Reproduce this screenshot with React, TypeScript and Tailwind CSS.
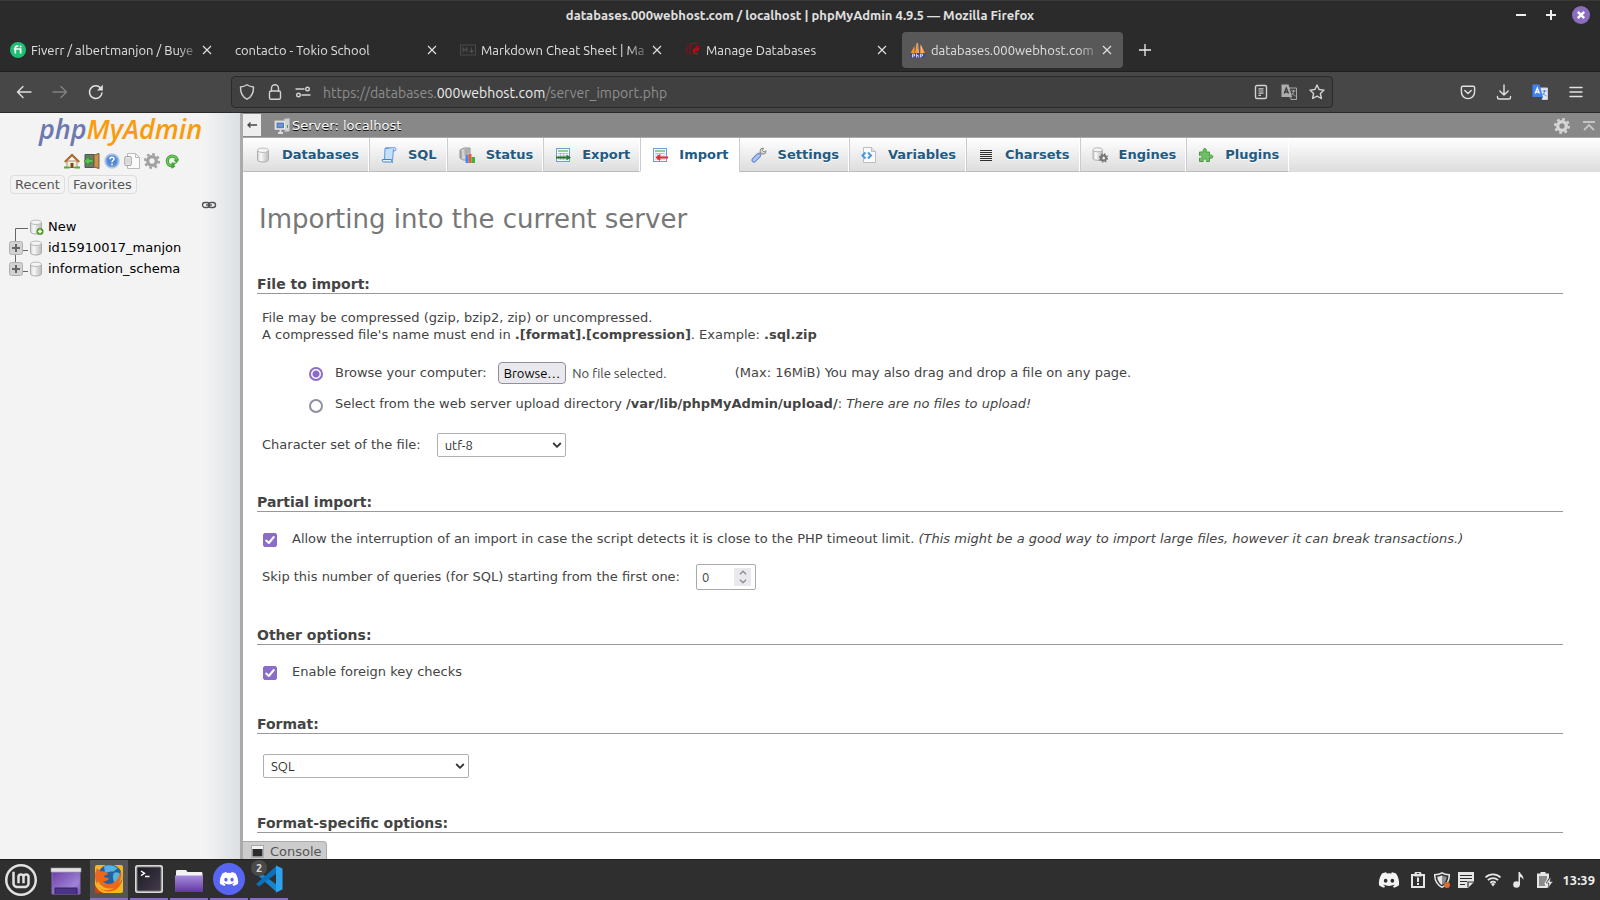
import { useRef, useState, type ReactNode } from "react";
import { FaDiscord } from "react-icons/fa";
import { SiLinuxmint } from "react-icons/si";

const uiFont = "font-['Ubuntu','Noto_Sans',sans-serif]";
const pageFont = "font-['DejaVu_Sans',sans-serif]";

function Svg({ size = 16, box = 16, children }: { size?: number; box?: number; children: ReactNode }) {
  return (
    <svg width={size} height={size} viewBox={`0 0 ${box} ${box}`} fill="none" className="shrink-0" aria-hidden="true">
      {children}
    </svg>
  );
}

/* ---------- browser icons ---------- */

const CloseX = () => (
  <Svg size={10} box={10}>
    <path d="M1 1l8 8M9 1l-8 8" stroke="#e4e4e4" strokeWidth="1.1" />
  </Svg>
);

const FiverrIcon = () => (
  <Svg>
    <circle cx="8" cy="8" r="8" fill="#1dbf73" />
    <path d="M8.300 4.200H7.400C6 4.200 5.300 5 5.300 6.200v5.300M3.800 7h6.800v4.500" stroke="#fff" strokeWidth="1.700" />
    <circle cx="10.600" cy="4.600" r="1" fill="#fff" />
  </Svg>
);

const MarkdownIcon = () => (
  <Svg>
    <rect x="0.500" y="3" width="15" height="10" stroke="#4a4a4a" />
    <path d="M3 10.500V6l2 2.500L7 6v4.500M11.500 5.500v4.500M9.500 8.500l2 2 2-2" stroke="#4e4e4e" strokeWidth="1.200" />
  </Svg>
);

const HostIcon = () => (
  <Svg>
    <path d="M4 3C1.500 5 1 9 3 12M6.500 3.500C4 5.500 4 10 6 13" stroke="#7d1319" strokeWidth="1.300" />
    <path d="M8.500 8.500c1-2.800 4-3 5-1.500-.8 2-3.800 1.500-5 1.500-.3 2.500 2 3.700 4.500 3" stroke="#b81019" strokeWidth="1.500" />
    <path d="M5 2.500c3-2 6-1.500 8 0M11 4.500h4" stroke="#8d151b" strokeWidth="1.100" />
  </Svg>
);

const PmaFavicon = () => (
  <Svg>
    <path d="M6.500 0L8.500 11H5zM4.500 3.500V11H.8zM10.500 2L15 11H10z" fill="#f79a22" />
    <path d="M7.500 1l1 10M11 4l1.500 7" stroke="#d9d4c8" strokeWidth=".8" />
    <path d="M0 11h16l-1 5H.8z" fill="#4a4b82" />
    <path d="M2.500 15.500v-3.500H4.500v2H2.500M6.500 11.500v4M6.500 13.500h1.800v2M10.500 15.500v-3.500h2v2h-2" stroke="#d5d6f0" strokeWidth=".9" />
  </Svg>
);

const TranslateIcon = ({ color }: { color?: boolean }) => (
  <Svg>
    <path d="M8 4h7.500v11.500H10z" fill={color ? "#e8e8ea" : "#454545"} stroke={color ? "#c9ccd2" : "#a8a8a8"} />
    <path d="M10.500 7h4M12.500 6v1c0 2-1 3-2 4M11 9c1 1.500 2 2.500 3.500 3" stroke={color ? "#4a82e8" : "#a8a8a8"} />
    <path d="M.5.5h7L11 13H.5z" fill={color ? "#3f83f3" : "#adadad"} />
    <path d="M8 13l1.500 2.500 1.500-2.500z" fill={color ? "#2052b4" : "#777"} />
    <path d="M3.200 9.500L5.300 4l2.200 5.500M4 8h2.700" stroke={color ? "#fff" : "#3c3c3c"} strokeWidth="1.300" />
  </Svg>
);

const stroke = { stroke: "#e2e2e2", strokeWidth: 1.4, strokeLinecap: "round" as const, strokeLinejoin: "round" as const };

const BackIcon = () => (
  <Svg><path d="M15 8H1.500M7 2.500L1.500 8 7 13.500" {...stroke} /></Svg>
);
const ForwardIcon = () => (
  <Svg><path d="M1 8h13.500M9 2.500L14.500 8 9 13.500" {...stroke} stroke="#828282" /></Svg>
);
const ReloadIcon = () => (
  <Svg>
    <path d="M14 9a6.300 6.300 0 1 1-1.500-5" {...stroke} strokeWidth="1.500" />
    <path d="M14.800.8v5.700H9z" fill="#e2e2e2" />
  </Svg>
);
const ShieldIcon = () => (
  <Svg><path d="M8 .8c2 1.400 4.200 2 6.500 2.200C14.600 8.500 12.500 13 8 15.200 3.500 13 1.400 8.500 1.500 3 3.800 2.800 6 2.200 8 .8z" {...stroke} stroke="#d2d2d2" /></Svg>
);
const LockIcon = () => (
  <Svg>
    <rect x="2.500" y="7" width="11" height="8.200" rx="1.500" {...stroke} stroke="#d2d2d2" />
    <path d="M4.500 7V4.300a3.500 3.500 0 0 1 7 0V7" {...stroke} stroke="#d2d2d2" />
  </Svg>
);
const PermissionsIcon = () => (
  <Svg>
    <path d="M1 5h8M7 11h8" {...stroke} stroke="#d2d2d2" />
    <circle cx="12.500" cy="5" r="1.800" {...stroke} stroke="#d2d2d2" />
    <circle cx="3.500" cy="11" r="1.800" {...stroke} stroke="#d2d2d2" />
  </Svg>
);
const ReaderIcon = () => (
  <Svg>
    <rect x="2.500" y="1.500" width="11" height="13" rx="1.500" {...stroke} stroke="#d2d2d2" />
    <path d="M5.500 4.800h5M5.500 7h5M5.500 9.200h5M5.500 11.400h2.500" stroke="#d2d2d2" strokeWidth="1.200" />
  </Svg>
);
const StarIcon = () => (
  <Svg><path d="M8 1l2.100 4.500 5 .6-3.700 3.400 1 5L8 12.100l-4.400 2.400 1-5L.9 6.100l5-.6z" {...stroke} stroke="#d2d2d2" /></Svg>
);
const PocketIcon = () => (
  <Svg>
    <path d="M2.700 2.200h10.600c.8 0 1.300.5 1.300 1.300V8A6.600 6.600 0 0 1 1.400 8V3.500c0-.8.5-1.300 1.300-1.300z" {...stroke} />
    <path d="M4.800 6.500L8 9.500l3.200-3" {...stroke} />
  </Svg>
);
const DownloadIcon = () => (
  <Svg><path d="M8 1v10M3.800 7L8 11l4.200-4M1.500 12.500v1c0 .9.600 1.500 1.500 1.500h10c.9 0 1.500-.6 1.500-1.500v-1" {...stroke} /></Svg>
);
const MenuIcon = () => (
  <Svg><path d="M2 3.500h12M2 8h12M2 12.500h12" {...stroke} /></Svg>
);

/* ---------- phpMyAdmin icons ---------- */

const Gradients = () => (
  <svg width="0" height="0" className="absolute" aria-hidden="true">
    <defs>
      <linearGradient id="cyl"><stop offset="0" stopColor="#cfcfcf" /><stop offset=".3" stopColor="#fafafa" /><stop offset=".6" stopColor="#dcdcdc" /><stop offset="1" stopColor="#bcbcbc" /></linearGradient>
      <linearGradient id="violet" x1="0" y1="0" x2="1" y2="1"><stop offset="0" stopColor="#6d3fa8" /><stop offset=".7" stopColor="#9e83d6" /><stop offset="1" stopColor="#7b50b6" /></linearGradient>
      <linearGradient id="folder" x1="0" y1="0" x2="0" y2="1"><stop offset="0" stopColor="#a78cdb" /><stop offset="1" stopColor="#6238a4" /></linearGradient>
      <linearGradient id="dark" x1="0" y1="0" x2="1" y2="1"><stop offset="0" stopColor="#1c1a22" /><stop offset="1" stopColor="#433b4d" /></linearGradient>
    </defs>
  </svg>
);

const cylinder = (
  <>
    <path d="M2.500 3.300v9.500c0 1.200 2.400 2.200 5.500 2.200s5.500-1 5.500-2.200V3.300" fill="url(#cyl)" stroke="#adadad" />
    <ellipse cx="8" cy="3.300" rx="5.500" ry="2.200" fill="#f4f4f4" stroke="#bcbcbc" />
  </>
);

const GearShape = ({ cx, cy, r, color }: { cx: number; cy: number; r: number; color: string }) => (
  <>
    <circle cx={cx} cy={cy} r={r * 0.86} stroke={color} strokeWidth={r * 0.28} strokeDasharray={`${r * 0.3377} ${r * 0.3377}`} />
    <circle cx={cx} cy={cy} r={r * 0.54} stroke={color} strokeWidth={r * 0.42} />
  </>
);

const DbIcon = () => <Svg>{cylinder}</Svg>;
const DbAddIcon = () => (
  <Svg>
    {cylinder}
    <circle cx="12" cy="12.500" r="3.500" fill="#4f9a28" />
    <path d="M12 10.500v4M10 12.500h4" stroke="#fff" strokeWidth="1.300" />
  </Svg>
);
const SqlIcon = () => (
  <Svg>
    <path d="M4 1.500h8.500L11.500 13.500H3.500z" fill="#c6dffb" stroke="#5b97dc" />
    <path d="M4.500 .8h9.500c1.300 0 1.300 3 0 3h-1.500V2.300" fill="#e3f0fe" stroke="#5b97dc" />
    <path d="M1.500 12.500h9c0 2 .5 2.500 1.500 2.500H2.500c-1.500 0-1.500-2.500-1-2.500z" fill="#e8f3fe" stroke="#4484cb" />
  </Svg>
);
const StatusIcon = () => (
  <Svg>
    <path d="M1 3l4-2h6v12H4l-3-2z" fill="#d2d2d2" stroke="#909090" />
    <path d="M5.500 3H10M5.500 5H10M5.500 7H9M2 4v7" stroke="#888" />
    <path d="M6.500 8h3v8h-3z" fill="#4488f0" />
    <path d="M9.500 7h3v9h-3z" fill="#ef5b35" />
    <path d="M12.500 10H16v6h-3.500z" fill="#35b83c" />
  </Svg>
);
const sheet = (
  <>
    <rect x="1.500" y="1.500" width="13" height="13" fill="#f4f8fd" stroke="#6f9dd8" />
    <path d="M3 4h10" stroke="#7bbf6a" strokeWidth="1.500" />
    <path d="M3 6.500h10M3 9h10M3 12h10M5.500 6v7M8.500 6v7" stroke="#a6b4c4" strokeWidth=".8" />
  </>
);
const ExportIcon = () => (
  <Svg>
    {sheet}
    <path d="M1 10.500h12" stroke="#27702a" strokeWidth="2" />
    <path d="M11.500 7.500l4.500 3-4.500 3z" fill="#2f7d32" />
  </Svg>
);
const ImportIcon = () => (
  <Svg>
    {sheet}
    <path d="M7 10.500h9" stroke="#ee2a31" strokeWidth="2" />
    <path d="M8 7l-4.500 3.500L8 14z" fill="#ee2a31" />
  </Svg>
);
const SettingsIcon = () => (
  <Svg>
    <path d="M3 13L7.500 8.500" stroke="#5f86cf" strokeWidth="5" strokeLinecap="round" />
    <path d="M3 13L7.500 8.500" stroke="#abc6f4" strokeWidth="3" strokeLinecap="round" />
    <path d="M8.500 7.500L11 5" stroke="#9a9a9a" strokeWidth="3" />
    <path d="M12.500 1.200a3 3 0 1 0 2.500 2.600L13 5l-1.500-1.500z" fill="#d7d7d7" stroke="#8c8c8c" />
  </Svg>
);
const VariablesIcon = () => (
  <Svg>
    <path d="M2.500.5h8l4 4v11h-12z" fill="#fafafa" stroke="#bdbdbd" />
    <path d="M10.500.5v4h4" fill="#e4e4e4" stroke="#bdbdbd" />
    <path d="M4.500 5.500L1.500 8.500l3 3M7 5.500l3 3-3 3" stroke="#4795e6" strokeWidth="2" />
  </Svg>
);
const CharsetsIcon = () => (
  <Svg><path d="M2 3.500h12M2 5.500h12M2 7.500h12M2 9.500h12M2 11.500h12M2 13.500h12" stroke="#2e2e2e" strokeWidth="1.100" /></Svg>
);
const EnginesIcon = () => (
  <Svg>
    <path d="M1 3v8.500c0 1 2 1.800 4.700 1.800s4.800-.8 4.800-1.800V3" fill="url(#cyl)" stroke="#adadad" />
    <ellipse cx="5.700" cy="2.800" rx="4.800" ry="2" fill="#f6f6f6" stroke="#b4b4b4" />
    <GearShape cx={11.5} cy={11} r={4.7} color="#747474" />
  </Svg>
);
const PluginsIcon = () => (
  <Svg>
    <path d="M1.500 5H5.500C4.700 3 5.300 1.500 6.800 1.500S8.800 3 8 5H11.500v3.500c2-.8 3.300-.2 3.300 1.200s-1.300 2-3.300 1.200V14.500H8.300c.6-1.800-.2-2.600-1.500-2.600s-2 .8-1.500 2.600H1.500V11c1.500.6 2.500 0 2.500-1.300S3 7.800 1.500 8.500z" fill="#6fbf66" stroke="#4a9a43" />
  </Svg>
);
const HomeIcon = () => (
  <Svg>
    <path d="M3 8h10v6.500H3z" fill="#f5ecd8" stroke="#a59370" />
    <path d="M.8 9L8 2l7.200 7" stroke="#a86a2f" strokeWidth="2.200" />
    <path d="M6.500 10h3v5h-3z" fill="#7a4a20" />
    <path d="M0 14.500h5.500M10.500 14.500H16" stroke="#54a83c" strokeWidth="2" />
  </Svg>
);
const ExitIcon = () => (
  <Svg>
    <path d="M1 1.500h9v13H1z" fill="#6b7a6b" stroke="#4a554b" />
    <path d="M10 2l5-1.500v15L10 14z" fill="#c89255" stroke="#8a5a28" />
    <path d="M0 8l5-4.500v2.800H9v3.400H5v2.800z" fill="#5cc455" stroke="#2e7f2b" strokeWidth=".7" />
  </Svg>
);
const HelpIcon = () => (
  <Svg>
    <circle cx="8" cy="8" r="7" fill="#5289d4" stroke="#b7c9e4" strokeWidth="1.500" />
    <circle cx="8" cy="8" r="5.600" stroke="#8fb4e8" strokeWidth=".7" />
    <path d="M6 6.200C6 3.700 10 3.700 10 6c0 1.500-2 1.500-2 3.200M8 10.500v1.700" stroke="#fff" strokeWidth="1.500" />
  </Svg>
);
const DocsIcon = () => (
  <Svg>
    <path d="M3.500.5h8l4 4v11h-12z" fill="#fbfbfb" stroke="#bababa" />
    <path d="M11.500.5v4h4" stroke="#bababa" />
    <rect x=".8" y="3.500" width="6.500" height="9" rx="1.500" fill="#efefef" stroke="#9d9d9d" />
    <path d="M3 5v6M5 5v6" stroke="#c4c4c4" />
  </Svg>
);
const GearIcon = ({ color = "#a1a1a1" }: { color?: string }) => (
  <Svg><GearShape cx={8} cy={8} r={8} color={color} /></Svg>
);
const RefreshIcon = () => (
  <Svg>
    <path d="M13.300 7.500A5 5 0 1 0 7.500 13" stroke="#47a63b" strokeWidth="3.200" />
    <path d="M13.300 7.500A5 5 0 1 0 7.500 13" stroke="#72cc62" strokeWidth="1.200" />
    <path d="M7.500 9.500l5 .2L10.200 12l1.300 1.500L8 15.800 7 14z" fill="#47a63b" />
    <path d="M9.500 6.500H15l-2.500 4z" fill="#47a63b" />
  </Svg>
);
const LinkIcon = () => (
  <Svg>
    <rect x="1.500" y="5.500" width="7" height="5" rx="2.500" stroke="#555" strokeWidth="1.400" />
    <rect x="7.500" y="5.500" width="7" height="5" rx="2.500" stroke="#555" strokeWidth="1.400" />
    <path d="M5 8h6" stroke="#555" strokeWidth="1.400" />
  </Svg>
);
const ServerIcon = () => (
  <Svg>
    <path d="M10 1l5.500-.5V13l-4.500 1z" fill="#d4d4d4" stroke="#b0b0b0" />
    <rect x="1" y="3" width="10.500" height="8.500" fill="#efefef" stroke="#cfcfcf" />
    <rect x="3" y="5" width="6.500" height="4.800" fill="#6b94d2" stroke="#3866ac" strokeWidth=".8" />
    <path d="M4 15h5M6.500 12v3" stroke="#dcdcdc" strokeWidth="2" />
    <path d="M13.500 7v3" stroke="#42a642" />
  </Svg>
);

/* ---------- taskbar icons ---------- */

const DesktopIcon = () => (
  <Svg size={32} box={32}>
    <path d="M2 8h28v22H2z" fill="url(#violet)" stroke="#8b6dc0" />
    <path d="M1 4h30v4H1z" fill="#e2e2e2" stroke="#9a9a9a" strokeWidth=".6" />
    <path d="M5 30v-6h22v6" fill="#4c3388" stroke="#32235c" />
  </Svg>
);
const FirefoxIcon = () => (
  <Svg size={28} box={28}>
    <rect width="28" height="28" rx="2" fill="#f6b81c" />
    <circle cx="15" cy="12" r="12.500" fill="#24609f" />
    <path d="M9 1.500c5-2.500 11-1 14 2-3 .5-3 3.500-6 3s-5 1.500-7 .5zM19 8c3-2 6 0 7 3-1 5-4 8-7 9 1-4-3-7 0-12z" fill="#55b4de" />
    <path d="M0 9L2 3l3 3 5 .5c2 .5 3 2 3 3-2 0-4 1-4 2.500 1.500 1 4 .5 5 1.500-1 2-3.500 3-6 2.500 2 3 6 4 10 2 4-2 7-7 7-12 3 6 2 14-3 18-6 4-14 3-18-2-3-4-4-7-4-13z" fill="#e9681d" />
    <path d="M3 16c3 6 9 9 16 7-6 4-15 2-17-4z" fill="#f8b52a" />
    <path d="M24 1c3 5 3.500 12-.5 17 3-2 4.500-5 4.500-8V3z" fill="#f6b322" />
    <path d="M0 20c2 4 5 7 9 8H0z" fill="#c9411a" />
  </Svg>
);
const TerminalIcon = () => (
  <Svg size={28} box={28}>
    <rect width="28" height="28" rx="2.500" fill="#d9d9d9" />
    <rect x="2" y="2" width="24" height="24" rx="1" fill="url(#dark)" stroke="#777" />
    <path d="M6 6l3.500 2.300L6 10.600M10 11.500h4.500" stroke="#fff" strokeWidth="1.400" />
  </Svg>
);
const FolderIcon = () => (
  <Svg size={28} box={28}>
    <path d="M1 12V6.500C1 5.500 1.500 5 2.500 5H11l1.500 2H26c1 0 1.500.5 1.500 1.500V12z" fill="#f2f2f2" />
    <path d="M0 10.500h28V27H0z" fill="url(#folder)" />
  </Svg>
);
const VsCodeIcon = () => (
  <Svg size={28} box={28}>
    <path d="M1 8.500l3-2L22 20v7.500z" fill="#1685cf" />
    <path d="M1 19l3 2.500L22 8V.5z" fill="#0a72b8" />
    <path d="M21 .5l6.500 3v21L21 27.500z" fill="#2fa2ee" />
  </Svg>
);
const tray = "#e6e6e6";
const ClipboardIcon = () => (
  <Svg>
    <path d="M2 3h12v12H2z" stroke={tray} strokeWidth="2" />
    <path d="M5.500 3.500V2A2.500 2 0 0 1 10.500 2v1.500zM8 5.500v4.500M8 11v2" stroke={tray} strokeWidth="2" />
  </Svg>
);
const TrayShieldIcon = () => (
  <Svg>
    <path d="M8 .8c2 1.300 4.500 1.800 7.300 2C15.300 9 12.500 13 8 15.300 3.500 13 .7 9 .7 2.800 3.500 2.600 6 2.100 8 .8z" stroke={tray} strokeWidth="1.500" />
    <path d="M8 3.300c1.300.8 2.800 1.300 4.800 1.500C12.500 9 10.500 11.500 8 13z" fill="#8f8f8f" />
    <path d="M8 3.300C6.700 4.100 5.200 4.600 3.200 4.800 3.500 9 5.500 11.500 8 13z" fill={tray} />
    <circle cx="13" cy="13" r="3" fill="#e06a34" />
  </Svg>
);
const NoteIcon = () => (
  <Svg>
    <path d="M0 0h16v10l-6 6H0z" fill={tray} />
    <path d="M2 3.500h12M2 6.500h12M2 9.500h7M2 12.500h5M10 15.500V10h6" stroke="#2f2f2f" strokeWidth="1.200" />
  </Svg>
);
const WifiIcon = () => (
  <Svg>
    <path d="M.5 5.500a10.700 10.700 0 0 1 15 0M2.900 8.200a7.200 7.200 0 0 1 10.200 0M5.300 10.800a3.900 3.900 0 0 1 5.400 0" stroke={tray} strokeWidth="1.700" />
    <path d="M6 12L8 14.500l2-2.500a3 3 0 0 0-4 0z" fill={tray} />
  </Svg>
);
const MusicIcon = () => (
  <Svg>
    <circle cx="5.500" cy="12.500" r="3.300" fill={tray} />
    <path d="M7.500 13V0h1.500c.3 2.500 4.300 3.500 3.300 8-.6-2-2-2.800-3.300-3V13z" fill={tray} />
  </Svg>
);
const BatteryIcon = () => (
  <Svg>
    <path d="M3.500 0h5v1.500H12V6L9 11h2.500v5H0V1.500h3.500z" fill={tray} />
    <path d="M2 4h8v3l-3 5h1v2H2z" fill="#8b8b8b" />
    <path d="M14 5l-5 6h3l-1 5 5-6.500h-3z" fill={tray} stroke="#2f2f2f" strokeWidth=".5" />
  </Svg>
);

/* ---------- browser chrome ---------- */

const browserTabs = [
  { title: "Fiverr / albertmanjon / Buye", icon: <FiverrIcon /> },
  { title: "contacto - Tokio School" },
  { title: "Markdown Cheat Sheet | Ma", icon: <MarkdownIcon /> },
  { title: "Manage Databases", icon: <HostIcon /> },
  { title: "databases.000webhost.com", icon: <PmaFavicon />, active: true },
];

function BrowserTab({ title, icon, active }: { title: string; icon?: ReactNode; active?: boolean }) {
  return (
    <div className={`flex h-9 w-[221px] shrink items-center rounded pl-2 pr-[11px] ${active ? "bg-[#585858]" : ""}`}>
      <button className="flex min-w-0 flex-1 items-center gap-[5px] text-left">
        {icon}
        <span className="min-w-0 flex-1 overflow-hidden whitespace-nowrap [mask-image:linear-gradient(to_left,transparent,black_24px)]">{title}</span>
      </button>
      <button aria-label={`Close ${title}`}>
        <CloseX />
      </button>
    </div>
  );
}

function IconButton({ label, children }: { label: string; children: ReactNode }) {
  return (
    <button aria-label={label} title={label} className="flex shrink-0 items-center">
      {children}
    </button>
  );
}

function BrowserChrome() {
  return (
    <header className={`${uiFont} shrink-0 bg-[#2b2b2b] text-[#e0e0e0]`}>
      <div className="grid h-7 grid-cols-[120px_1fr_120px] items-center border-t border-[#3a3a3a]">
        <div />
        <h1 className="truncate text-center text-[13px] leading-4 font-bold">databases.000webhost.com / localhost | phpMyAdmin 4.9.5 — Mozilla Firefox</h1>
        <div className="flex items-center justify-end gap-3 pr-[10px]">
          <IconButton label="Minimize"><Svg size={18} box={18}><path d="M4 9h10" stroke="#eee" strokeWidth="2" /></Svg></IconButton>
          <IconButton label="Maximize"><Svg size={18} box={18}><path d="M4 9h10M9 4v10" stroke="#eee" strokeWidth="2" /></Svg></IconButton>
          <IconButton label="Close window">
            <Svg size={18} box={18}>
              <circle cx="9" cy="9" r="9" fill="#8b6dc0" />
              <path d="M5.800 5.800l6.400 6.400M12.200 5.800l-6.400 6.400" stroke="#fff" strokeWidth="2.400" />
            </Svg>
          </IconButton>
        </div>
      </div>
      <div className="flex h-11 items-center gap-1 border-b border-[#1f1f1f] pl-[2px] text-[13px] leading-5">
        {browserTabs.map((t) => <BrowserTab key={t.title} {...t} />)}
        <button aria-label="New tab" className="ml-3">
          <Svg size={12} box={12}><path d="M6 0v12M0 6h12" stroke="#eee" strokeWidth="1.300" /></Svg>
        </button>
      </div>
      <div className="flex h-[41px] items-center border-b border-[#2a2a2a] bg-[#474747] px-4 text-[14px] leading-5">
        <div className="flex w-[215px] shrink-0 items-center gap-5">
          <IconButton label="Back"><BackIcon /></IconButton>
          <IconButton label="Forward"><ForwardIcon /></IconButton>
          <IconButton label="Reload"><ReloadIcon /></IconButton>
        </div>
        <div className="flex h-8 w-[1102px] items-center gap-3 rounded border border-[#2a2a2a] bg-[#404040] px-[7px]">
          <IconButton label="Tracking protection"><ShieldIcon /></IconButton>
          <IconButton label="Site information"><LockIcon /></IconButton>
          <IconButton label="Permissions"><PermissionsIcon /></IconButton>
          <div role="textbox" aria-label="Address" className="min-w-0 flex-1 truncate pt-px text-[#8e8e8e]">
            https://databases.<span className="text-[#ececec]">000webhost.com</span>/server_import.php
          </div>
          <IconButton label="Reader view"><ReaderIcon /></IconButton>
          <IconButton label="Translate page"><TranslateIcon /></IconButton>
          <IconButton label="Bookmark"><StarIcon /></IconButton>
        </div>
        <div className="ml-auto flex shrink-0 items-center gap-5">
          <IconButton label="Save to Pocket"><PocketIcon /></IconButton>
          <IconButton label="Downloads"><DownloadIcon /></IconButton>
          <IconButton label="Translate"><TranslateIcon color /></IconButton>
          <IconButton label="Menu"><MenuIcon /></IconButton>
        </div>
      </div>
    </header>
  );
}

/* ---------- navigation panel ---------- */

function TreeRow({ name, isNew, last }: { name: string; isNew?: boolean; last?: boolean }) {
  return (
    <li className="flex h-[21px] items-center">
      <button aria-label={isNew ? "Create database" : `Expand ${name}`} className="shrink-0">
        <svg width="20" height="21" viewBox="0 0 20 21" fill="none" aria-hidden="true" className="block">
          {isNew ? (
            <path d="M7.500 21v-8.500H20" stroke="#666" />
          ) : (
            <>
              <path d={last ? "M7.500 0v11M14 13.500h6" : "M7.500 0v21M14 13.500h6"} stroke="#666" />
              <rect x="1.500" y="4.500" width="13" height="13" rx="2" fill="#d2d2d2" stroke="#b0b0b0" />
              <path d="M8 7v8M4 11h8" stroke="#666" strokeWidth="2" />
            </>
          )}
        </svg>
      </button>
      {isNew ? <DbAddIcon /> : <DbIcon />}
      <a href="#" className="ml-1 text-black">{name}</a>
    </li>
  );
}

function NavigationPanel() {
  return (
    <nav className="flex w-[243px] shrink-0 flex-col border-r-[3px] border-[#aaa] bg-[linear-gradient(to_right,#f3f3f3_205px,#dce0e4_240px)]">
      <a href="#" aria-label="phpMyAdmin" className="h-[38px] pl-[39px] font-['Open_Sans',sans-serif] text-[27px] leading-8 font-semibold italic text-[#f89c0e]">
        <span className="text-[#6c78af]">php</span>MyAdmin
      </a>
      <div className="flex gap-1 pl-16 pt-[2px]">
        <IconButton label="Home"><HomeIcon /></IconButton>
        <IconButton label="Log out"><ExitIcon /></IconButton>
        <IconButton label="Help"><HelpIcon /></IconButton>
        <IconButton label="Documentation"><DocsIcon /></IconButton>
        <IconButton label="Navigation settings"><GearIcon /></IconButton>
        <IconButton label="Refresh"><RefreshIcon /></IconButton>
      </div>
      <div className="flex gap-[3px] pl-[10px] pt-[6px] text-[#555]">
        <button className="h-[19px] rounded-sm border border-[#ddd] px-1 leading-4">Recent</button>
        <button className="h-[19px] rounded-sm border border-[#ddd] px-1 leading-4">Favorites</button>
      </div>
      <div className="flex justify-end pr-[23px] pt-[3px]">
        <IconButton label="Link with main panel"><LinkIcon /></IconButton>
      </div>
      <ul className="pl-2 pt-[3px]">
        <TreeRow name="New" isNew />
        <TreeRow name="id15910017_manjon" />
        <TreeRow name="information_schema" last />
      </ul>
    </nav>
  );
}

/* ---------- main panel ---------- */

const menu = [
  { label: "Databases", icon: <DbIcon /> },
  { label: "SQL", icon: <SqlIcon /> },
  { label: "Status", icon: <StatusIcon /> },
  { label: "Export", icon: <ExportIcon /> },
  { label: "Import", icon: <ImportIcon />, active: true },
  { label: "Settings", icon: <SettingsIcon /> },
  { label: "Variables", icon: <VariablesIcon /> },
  { label: "Charsets", icon: <CharsetsIcon /> },
  { label: "Engines", icon: <EnginesIcon /> },
  { label: "Plugins", icon: <PluginsIcon /> },
];

function Legend({ children }: { children: ReactNode }) {
  return <h3 className="h-[21px] border-b border-[#999] text-[14px] leading-[22px] font-bold text-[#444]">{children}</h3>;
}

function Select({ id, options, className }: { id: string; options: string[]; className: string }) {
  return (
    <div className={`relative h-6 ${className}`}>
      <select id={id} className={`${uiFont} h-full w-full appearance-none rounded-xs border border-[#b0b0b0] bg-white pl-[7px] text-[13px] leading-5 text-[#333]`}>
        {options.map((o) => <option key={o}>{o}</option>)}
      </select>
      <svg width="10" height="6" viewBox="0 0 10 6" fill="none" className="pointer-events-none absolute top-[9px] right-[4px]" aria-hidden="true">
        <path d="M1.200 1L5 4.800 8.800 1" stroke="#333" strokeWidth="1.800" />
      </svg>
    </div>
  );
}

function CheckRow({ id, children }: { id: string; children: ReactNode }) {
  return (
    <div className="flex items-center gap-[15px] pl-[6px]">
      <span className="mt-[3px] grid shrink-0">
        <input id={id} type="checkbox" defaultChecked className="peer col-start-1 row-start-1 size-[14px] appearance-none rounded-xs border border-[#8f8f9d] bg-white checked:border-[#8b6dc9] checked:bg-[#8b6dc9]" />
        <svg width="14" height="14" viewBox="0 0 14 14" fill="none" className="pointer-events-none invisible col-start-1 row-start-1 peer-checked:visible" aria-hidden="true">
          <path d="M3.200 7.600L5.800 10l5-6" stroke="#fff" strokeWidth="2" strokeLinecap="round" strokeLinejoin="round" />
        </svg>
      </span>
      <label htmlFor={id}>{children}</label>
    </div>
  );
}

const radioClass = "mt-[3px] mr-3 size-[14px] shrink-0 appearance-none rounded-full border-2 border-[#8f8f9d] bg-white checked:border-[#8b6dc9] checked:bg-[radial-gradient(circle,#8b6dc9_3px,white_4px)]";

function ImportForm() {
  const fileInput = useRef<HTMLInputElement>(null);
  const [fileName, setFileName] = useState("No file selected.");
  const [skip, setSkip] = useState(0);
  return (
    <form className="pl-[14px] pr-[37px] text-[#444]">
      <h2 className="pt-[28px] pl-[2px] text-[26px] leading-[38px] text-[#777]">Importing into the current server</h2>

      <section className="pt-[35px]">
        <Legend>File to import:</Legend>
        <div className="pl-[5px]">
          <p className="pt-[15px] leading-[17px]">
            File may be compressed (gzip, bzip2, zip) or uncompressed.
            <br />
            A compressed file's name must end in <b>.[format].[compression]</b>. Example: <b>.sql.zip</b>
          </p>
          <div className="mt-[18px] flex h-[23px] items-center pl-[47px]">
            <input type="radio" name="location" id="from-computer" defaultChecked className={radioClass} />
            <label htmlFor="from-computer">Browse your computer:</label>
            <div className={`${uiFont} ml-[11px] flex w-[237px] items-center gap-[6px] text-[13px]`}>
              <button type="button" onClick={() => fileInput.current?.click()} className="h-[22px] rounded border border-[#8f8f9d] bg-[#e9e9ed] px-[5px] leading-5 text-black">Browse…</button>
              <span className="truncate">{fileName}</span>
              <input ref={fileInput} type="file" aria-label="File to import" className="hidden" onChange={(e) => setFileName(e.target.files?.[0]?.name ?? "No file selected.")} />
            </div>
            <span>(Max: 16MiB) You may also drag and drop a file on any page.</span>
          </div>
          <div className="mt-[9px] flex h-[22px] items-center pl-[47px]">
            <input type="radio" name="location" id="from-server" className={radioClass} />
            <label htmlFor="from-server">
              Select from the web server upload directory <b>/var/lib/phpMyAdmin/upload/</b>: <i>There are no files to upload!</i>
            </label>
          </div>
          <div className="mt-[18px] flex items-center gap-4">
            <label htmlFor="charset">Character set of the file:</label>
            <Select id="charset" options={["utf-8", "iso-8859-1", "utf-16"]} className="w-[129px]" />
          </div>
        </div>
      </section>

      <section className="pt-[34px]">
        <Legend>Partial import:</Legend>
        <div className="pt-[18px]">
          <CheckRow id="allow-interrupt">
            Allow the interruption of an import in case the script detects it is close to the PHP timeout limit. <i>(This might be a good way to import large files, however it can break transactions.)</i>
          </CheckRow>
        </div>
        <div className="mt-[17px] flex items-center gap-4 pl-[5px]">
          <label htmlFor="skip">Skip this number of queries (for SQL) starting from the first one:</label>
          <div className="flex h-[26px] w-[60px] items-center rounded-xs border border-[#aaa] bg-white pr-1">
            <input id="skip" type="number" value={skip} onChange={(e) => setSkip(Number(e.target.value))} className={`${uiFont} min-w-0 flex-1 appearance-none pl-[5px] text-[13px] outline-none [&::-webkit-inner-spin-button]:appearance-none`} />
            <div className="flex h-[18px] w-[17px] flex-col items-center justify-center gap-1 bg-[#e9e9ed]">
              <button type="button" aria-label="Increase" onClick={() => setSkip(skip + 1)}>
                <svg width="8" height="5" viewBox="0 0 8 5" fill="none" className="block"><path d="M1 4.200L4 1.200l3 3" stroke="#8f8f9d" strokeWidth="1.500" /></svg>
              </button>
              <button type="button" aria-label="Decrease" onClick={() => setSkip(Math.max(0, skip - 1))}>
                <svg width="8" height="5" viewBox="0 0 8 5" fill="none" className="block"><path d="M1 .8l3 3 3-3" stroke="#8f8f9d" strokeWidth="1.500" /></svg>
              </button>
            </div>
          </div>
        </div>
      </section>

      <section className="pt-[34px]">
        <Legend>Other options:</Legend>
        <div className="pt-[18px]">
          <CheckRow id="foreign-keys">Enable foreign key checks</CheckRow>
        </div>
      </section>

      <section className="pt-[33px]">
        <Legend>Format:</Legend>
        <div className="pt-5 pl-[6px]">
          <label htmlFor="format" className="sr-only">Format</label>
          <Select id="format" options={["SQL", "CSV", "XML"]} className="w-[206px]" />
        </div>
      </section>

      <section className="pt-[34px]">
        <Legend>Format-specific options:</Legend>
      </section>
    </form>
  );
}

function MainPanel() {
  return (
    <main className="flex min-w-0 flex-1 flex-col bg-white">
      <div className="flex h-[25px] shrink-0 items-center border-b border-[#aaa] bg-[#888]">
        <button aria-label="Hide panel" className="flex h-[22px] w-[18px] items-center justify-center bg-[#eee]">
          <Svg size={12} box={12}><path d="M11 6H2M4.500 3.500L2 6l2.500 2.500" stroke="#444" strokeWidth="1.300" /></Svg>
        </button>
        <a href="#" className="ml-[13px] flex items-center gap-[2px] pt-px text-white [text-shadow:0_1px_0_#000]">
          <ServerIcon />
          Server: localhost
        </a>
        <div className="ml-auto flex items-center gap-[13px] pt-px pr-[5px]">
          <IconButton label="Page settings"><GearIcon color="#d6d6d6" /></IconButton>
          <IconButton label="Scroll to top"><Svg size={12} box={12}><path d="M0 2h12M1 10l5-5 5 5" stroke="#c4c4c4" strokeWidth="1.800" /></Svg></IconButton>
        </div>
      </div>
      <div className="flex h-[34px] shrink-0 bg-[linear-gradient(#fff,#dcdcdc)]">
        {menu.map(({ label, icon, active }) => (
          <a
            key={label}
            href="#"
            className={`flex items-center gap-[11px] border-r border-r-white pr-[9px] pl-[11px] font-bold text-[#235a81] [text-shadow:0_1px_0_#fff] ${active ? "border-l border-b border-l-[#ccc] border-b-white bg-white" : "border-b border-l border-b-[#bbb] border-l-[#ccc] first:border-l-transparent"}`}
          >
            {icon}
            {label}
          </a>
        ))}
      </div>
      <ImportForm />
      <button className="mt-auto flex h-[18px] w-[84px] shrink-0 items-center gap-[6px] rounded-tr-sm border-t border-r border-[#aaa] bg-[#ccc] pt-[2px] pl-2 text-[#555]">
        <Svg size={13} box={13}>
          <rect x=".5" y=".5" width="12" height="12" fill="#f2f2f2" stroke="#aaa" />
          <path d="M1.500 4h10v7.500h-10z" fill="#2c2c2c" />
        </Svg>
        Console
      </button>
    </main>
  );
}

/* ---------- taskbar ---------- */

const apps = [
  { name: "Firefox", icon: <FirefoxIcon />, focused: true },
  { name: "Terminal", icon: <TerminalIcon /> },
  { name: "Files", icon: <FolderIcon /> },
  {
    name: "Discord",
    icon: (
      <span className="flex size-8 items-center justify-center rounded-full bg-[#5865f2]">
        <FaDiscord size={20} color="#fff" />
      </span>
    ),
  },
  { name: "Visual Studio Code", icon: <VsCodeIcon />, count: 2 },
];

function Taskbar() {
  return (
    <footer className={`${uiFont} flex h-[41px] shrink-0 items-center border-t border-[#1f1f1f] bg-[#2f2f2f] pr-[5px]`}>
      <button aria-label="Menu" className="ml-[5px] flex size-8 items-center justify-center">
        <SiLinuxmint size={32} color="#e2e2e2" />
      </button>
      <button aria-label="Show desktop" className="ml-[13px]"><DesktopIcon /></button>
      <div className="ml-2 flex h-full gap-[2px]">
        {apps.map(({ name, icon, focused, count }) => (
          <button key={name} aria-label={name} className={`relative flex w-[38px] items-center justify-center border-b-2 border-[#8b6dc0] ${focused ? "bg-[#555]" : ""}`}>
            {icon}
            {count && <span className="absolute top-0 left-px flex size-4 items-center justify-center rounded-full bg-[#4a4a4a] text-[11px] font-bold text-[#ddd]">{count}</span>}
          </button>
        ))}
      </div>
      <div className="ml-auto flex items-center gap-2">
        <FaDiscord size={22} color="#f4f4f4" className="mr-[2px]" />
        <ClipboardIcon />
        <TrayShieldIcon />
        <NoteIcon />
        <span className="flex items-center gap-[10px] pl-[3px]">
          <WifiIcon />
          <MusicIcon />
          <BatteryIcon />
        </span>
        <time className="pl-px text-[13px] font-bold text-[#eee]">13:39</time>
      </div>
    </footer>
  );
}

export default function App() {
  return (
    <div className={`${pageFont} flex h-screen flex-col overflow-hidden text-[13px] leading-4`}>
      <Gradients />
      <BrowserChrome />
      <div className="flex min-h-0 flex-1">
        <NavigationPanel />
        <MainPanel />
      </div>
      <Taskbar />
    </div>
  );
}
